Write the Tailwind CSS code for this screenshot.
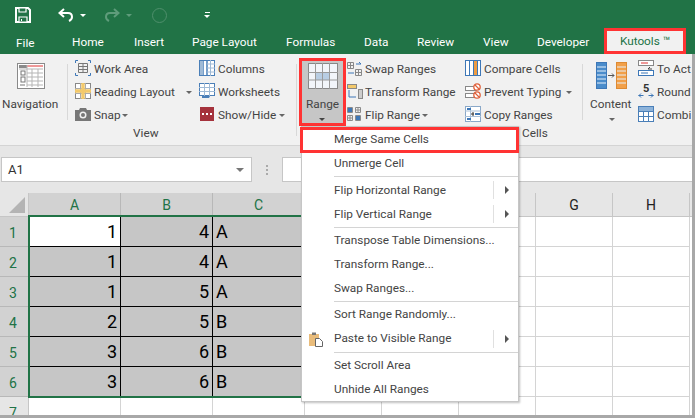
<!DOCTYPE html>
<html>
<head>
<meta charset="utf-8">
<script src="https://cdn.jsdelivr.net/npm/@tailwindcss/browser@4"></script>
</head>
<body class="bg-white">
<div class="relative w-[695px] h-[418px] overflow-hidden font-['Roboto','Noto_Sans',sans-serif] text-[11.800px] leading-[19px] text-[#444]">

  <!-- title + tabs -->
  <div class="h-[54px] bg-[#217346] flex flex-col text-white">
    <div class="h-[30px] flex items-center pl-[15px]">
      <svg class="w-[16px] h-[16px]" viewBox="0 0 16 16" fill="none"><path d="M1 1h12l2 2v12H1z" stroke="#fff" stroke-width="2"/><path d="M4 1h7v4H4zM4 10h8v5H4z" fill="#217346" stroke="#fff" stroke-width="1.2"/><path d="M6 12h1v2H6z" fill="#fff"/></svg>
      <svg class="ml-[27px] w-[16px] h-[14px]" viewBox="0 0 16 14" fill="none"><path d="M6 1 1.500 5 6 9" stroke="#fff" stroke-width="2"/><path d="M2 5h8c3 0 4 2 4 4s-1 3-3 4" stroke="#fff" stroke-width="2"/></svg>
      <span class="ml-[6px] w-0 h-0 border-x-[3px] border-x-transparent border-t-[3px] border-t-white"></span>
      <svg class="ml-[18px] w-[16px] h-[14px]" viewBox="0 0 16 14" fill="none"><path d="M10 1l4.500 4L10 9" stroke="#5f9c7b" stroke-width="2"/><path d="M14 5H6C3 5 2 7 2 9s1 3 3 4" stroke="#5f9c7b" stroke-width="2"/></svg>
      <span class="ml-[6px] w-0 h-0 border-x-[3px] border-x-transparent border-t-[3px] border-t-[#5f9c7b]"></span>
      <span class="ml-[20px] w-[15px] h-[15px] rounded-full border border-[#4f8f6c]"></span>
      <span class="ml-[37px] flex flex-col items-center gap-[2px]"><span class="w-[5px] h-px bg-white"></span><span class="w-0 h-0 border-x-[3px] border-x-transparent border-t-[3px] border-t-white"></span></span>
    </div>
    <div class="relative h-[24px]">
      <span class="absolute left-[16px] top-[4px]">File</span>
      <span class="absolute left-[72px] top-[3px]">Home</span>
      <span class="absolute left-[134px] top-[3px]">Insert</span>
      <span class="absolute left-[192px] top-[3px]">Page Layout</span>
      <span class="absolute left-[286px] top-[3px]">Formulas</span>
      <span class="absolute left-[364px] top-[3px]">Data</span>
      <span class="absolute left-[417px] top-[3px]">Review</span>
      <span class="absolute left-[483px] top-[3px]">View</span>
      <span class="absolute left-[537px] top-[3px]">Developer</span>
      <span class="absolute left-[604px] top-[-2px] w-[82px] h-[26px] bg-[#f1f1f1] border-[3px] border-[#f33] text-[#217346] flex items-center justify-center">Kutools ™</span>
    </div>
  </div>

  <!-- ribbon -->
  <div class="relative h-[92px] bg-[#f1f1f1] border-b border-[#d4d4d4]">
    <!-- Navigation -->
    <svg class="absolute left-[17px] top-[9px] w-[28px] h-[26px]" viewBox="0 0 28 26" fill="none"><rect x=".5" y=".5" width="27" height="25" fill="#fff" stroke="#8a8a8a"/><rect x="2" y="2" width="8" height="3" fill="#8a8a8a"/><path d="M10 3h16" stroke="#d33" /><path d="M2 6h24M10 10h16M10 14h16M10 18h16M10 22h16M10 2v22M15 6v18M21 6v18" stroke="#b5b5b5"/><rect x="4" y="8" width="4" height="4" stroke="#777"/><rect x="4" y="14" width="4" height="5" stroke="#777"/><path d="M3 22h5" stroke="#777"/></svg>
    <span class="absolute left-[2px] top-[41px]">Navigation</span>
    <div class="absolute left-[67px] top-[10px] h-[56px] w-px bg-[#d8d8d8]"></div>

    <!-- view col 1 -->
    <svg class="absolute left-[75px] top-[6px] w-[16px] h-[16px]" viewBox="0 0 16 16" fill="none"><path d="M3.500 3.500h9v9h-9zM3.500 6.500h9M3.500 9.500h9M8 3.500v9" stroke="#777"/><path d="M.5 3V.5H3M13 .5h2.500V3M.5 13v2.500H3M13 15.500h2.500V13" stroke="#3d77b7"/></svg>
    <span class="absolute left-[94px] top-[6px]">Work Area</span>
    <svg class="absolute left-[75px] top-[29px] w-[16px] h-[16px]" viewBox="0 0 16 16" fill="none"><rect x=".5" y=".5" width="15" height="15" fill="#fff" stroke="#888"/><path d="M5.500 0v16M10.500 0v16M0 5.500h16M0 10.500h16" stroke="#aaa"/><path d="M0 8h16M8 0v16" stroke="#f3c96b" stroke-width="3.400"/></svg>
    <span class="absolute left-[94px] top-[29px]">Reading Layout</span>
    <span class="absolute left-[186px] top-[37px] w-0 h-0 border-x-[3px] border-x-transparent border-t-[3px] border-t-[#666]"></span>
    <svg class="absolute left-[75px] top-[54px] w-[16px] h-[13px]" viewBox="0 0 16 13"><path d="M0 2h4l1-2h6l1 2h4v11H0z" fill="#777"/><circle cx="8" cy="7" r="3.500" fill="#f1f1f1"/><circle cx="8" cy="7" r="2" fill="#777"/></svg>
    <span class="absolute left-[94px] top-[52px]">Snap</span>
    <span class="absolute left-[122px] top-[60px] w-0 h-0 border-x-[3px] border-x-transparent border-t-[3px] border-t-[#666]"></span>

    <!-- view col 2 -->
    <svg class="absolute left-[199px] top-[6px] w-[16px] h-[16px]" viewBox="0 0 16 16" fill="none"><rect x=".5" y=".5" width="15" height="15" fill="#fff" stroke="#4a7fb8"/><path d="M4 0v16M8 0v16" stroke="#4a7fb8" stroke-width="1.500"/><path d="M11.500 0v16M8 4h8M8 8h8M8 12h8" stroke="#9fbad6"/><rect x="1" y="1" width="3" height="14" fill="#9fbad6"/></svg>
    <span class="absolute left-[218px] top-[6px]">Columns</span>
    <svg class="absolute left-[199px] top-[29px] w-[16px] h-[16px]" viewBox="0 0 16 16" fill="none"><rect x=".5" y=".5" width="15" height="12" fill="#fff" stroke="#4a7fb8"/><path d="M0 4.500h16M0 8.500h16M5.500 0v13M10.500 0v13" stroke="#9fbad6"/><path d="M3 13v2h7l1-2z" fill="#4a7fb8"/></svg>
    <span class="absolute left-[218px] top-[29px]">Worksheets</span>
    <div class="absolute left-[200px] top-[53px] w-[14px] h-[14px] bg-[#a5323c] flex items-center justify-center text-white"><svg class="w-[10px] h-[2px]" viewBox="0 0 10 2"><path d="M0 0h2v2H0zM4 0h2v2H4zM8 0h2v2H8z" fill="#fff"/></svg></div>
    <span class="absolute left-[218px] top-[52px]">Show/Hide</span>
    <span class="absolute left-[279px] top-[60px] w-0 h-0 border-x-[3px] border-x-transparent border-t-[3px] border-t-[#666]"></span>
    <span class="absolute left-[133px] top-[70px]">View</span>
    <div class="absolute left-[296px] top-[10px] h-[72px] w-px bg-[#d8d8d8]"></div>

    <!-- Range -->
    <div class="absolute left-[299px] top-[4px] w-[47px] h-[68px] bg-[#c6c6c6] border-[3px] border-[#f33]"></div>
    <svg class="absolute left-[308px] top-[9px] w-[30px] h-[26px]" viewBox="0 0 30 26" fill="none"><rect x=".5" y=".5" width="29" height="25" fill="#f2f5fa" stroke="#888"/><rect x="7" y="9" width="14" height="8" fill="#b8cde3"/><path d="M7.500 0v26M14.500 0v26M21.500 0v26M0 9.500h30M0 17h30" stroke="#9a9a9a"/></svg>
    <span class="absolute left-[306px] top-[41px]">Range</span>
    <span class="absolute left-[319px] top-[64px] w-0 h-0 border-x-[3px] border-x-transparent border-t-[3px] border-t-[#444]"></span>

    <!-- range col 1 -->
    <svg class="absolute left-[347px] top-[7px] w-[16px] h-[15px]" viewBox="0 0 16 15" fill="none"><path d="M.5 1.500h6v6h-6zM3.500 1.500v6M.5 4.500h6M8.500 8.500h6v6h-6zM11.500 8.500v6M8.500 11.500h6" stroke="#888"/><path d="M9 3h5l-2-2M7 12H1" stroke="#3d77b7"/></svg>
    <span class="absolute left-[365px] top-[6px]">Swap Ranges</span>
    <svg class="absolute left-[347px] top-[30px] w-[16px] h-[15px]" viewBox="0 0 16 15" fill="none"><rect x=".5" y=".5" width="9" height="4" fill="#f3c96b" stroke="#888"/><rect x="11.500" y="5.500" width="4" height="9" fill="#ccc" stroke="#888"/><path d="M2 6v7h7" stroke="#3d77b7"/></svg>
    <span class="absolute left-[365px] top-[29px]">Transform Range</span>
    <svg class="absolute left-[347px] top-[53px] w-[14px] h-[14px]" viewBox="0 0 14 14" fill="none"><path d="M.5.500h5v5h-5zM8.500.500h5v5h-5zM.5 8.500h5v5h-5zM8.500 8.500h5v5h-5zM3 .5v5M.5 3h5M11 .5v5M8.500 3h5M3 8.500v5M.5 11h5M11 8.500v5M8.500 11h5" stroke="#8a8a8a"/><path d="M1 1h4v4H1zM9 9h4v4H9z" fill="#3d77b7"/></svg>
    <span class="absolute left-[365px] top-[52px]">Flip Range</span>
    <span class="absolute left-[422px] top-[60px] w-0 h-0 border-x-[3px] border-x-transparent border-t-[3px] border-t-[#666]"></span>

    <!-- range col 2 -->
    <svg class="absolute left-[465px] top-[6px] w-[16px] h-[16px]" viewBox="0 0 16 16" fill="none"><rect x=".5" y=".5" width="15" height="15" fill="#fff" stroke="#3d77b7"/><rect x="9" y="1" width="4" height="14" fill="#ef9c42"/><path d="M4.500 0v16M8.500 0v16M12.500 0v16" stroke="#3d77b7"/></svg>
    <span class="absolute left-[484px] top-[6px]">Compare Cells</span>
    <svg class="absolute left-[465px] top-[29px] w-[16px] h-[16px]" viewBox="0 0 16 16" fill="none"><rect x=".5" y="3.500" width="11" height="4" fill="#fff" stroke="#888"/><rect x=".5" y="10.500" width="11" height="4" fill="#fff" stroke="#888"/><circle cx="12" cy="4" r="3.200" fill="#fff" stroke="#e0603a" stroke-width="1.300"/><circle cx="12" cy="12" r="3.200" fill="#fff" stroke="#e0603a" stroke-width="1.300"/><path d="M10 2l4 4M10 10l4 4" stroke="#e0603a" stroke-width="1.200"/></svg>
    <span class="absolute left-[484px] top-[29px]">Prevent Typing</span>
    <span class="absolute left-[566px] top-[37px] w-0 h-0 border-x-[3px] border-x-transparent border-t-[3px] border-t-[#666]"></span>
    <svg class="absolute left-[465px] top-[52px] w-[16px] h-[16px]" viewBox="0 0 16 16" fill="none"><rect x=".5" y=".5" width="15" height="15" fill="#fff" stroke="#8aa8c8"/><path d="M0 5h16M0 10.500h16M5.500 0v16" stroke="#a9c0d8"/><rect x="2" y="2" width="4" height="2" fill="#3d77b7"/><rect x="10" y="7" width="5" height="2" fill="#3d77b7"/><rect x="2" y="12" width="4" height="2" fill="#3d77b7"/><path d="M6 8h3M8 6v4" stroke="#333"/></svg>
    <span class="absolute left-[484px] top-[52px]">Copy Ranges</span>
    <span class="absolute left-[522px] top-[70px]">Cells</span>
    <div class="absolute left-[582px] top-[10px] h-[56px] w-px bg-[#d8d8d8]"></div>

    <!-- content -->
    <svg class="absolute left-[596px] top-[8px] w-[31px] h-[27px]" viewBox="0 0 31 27" fill="none"><rect x=".5" y=".5" width="10" height="26" fill="#4a8ccb" stroke="#3d77b7"/><rect x="20.500" y=".5" width="10" height="26" fill="#f2a049" stroke="#dd8a33"/><path d="M1 5h9M1 9h9M1 13h9M1 17h9M1 21h9M21 5h9M21 9h9M21 13h9M21 17h9M21 21h9" stroke="#e6f0fa"/><path d="M12 13.500h6M16 11.500l2 2-2 2" stroke="#555"/></svg>
    <span class="absolute left-[590px] top-[41px]">Content</span>
    <span class="absolute left-[609px] top-[64px] w-0 h-0 border-x-[3px] border-x-transparent border-t-[3px] border-t-[#666]"></span>

    <svg class="absolute left-[638px] top-[6px] w-[16px] h-[16px]" viewBox="0 0 16 16" fill="none"><rect x=".5" y=".5" width="15" height="5" fill="#fff" stroke="#888"/><path d="M3 3h7" stroke="#d33"/><rect x=".5" y="10.500" width="15" height="5" fill="#fff" stroke="#3d77b7"/><path d="M3 13h7" stroke="#3d77b7"/><path d="M10 9h4M12 7l-2 2" stroke="#444"/></svg>
    <span class="absolute left-[657px] top-[6px]">To Act</span>
    <svg class="absolute left-[638px] top-[29px] w-[16px] h-[16px]" viewBox="0 0 16 16" fill="none"><path d="M.5 12.500h5M1 12.500l2-2M1 12.500l2 2M10.500 12.500h5M15 12.500l-2-2M15 12.500l-2 2" stroke="#3d77b7"/></svg>
    <span class="absolute left-[643px] top-[25px] text-[11px] font-bold text-[#333]">5</span>
    <span class="absolute left-[657px] top-[29px]">Round</span>
    <svg class="absolute left-[638px] top-[52px] w-[16px] h-[16px]" viewBox="0 0 16 16" fill="none"><rect x=".5" y=".5" width="15" height="15" fill="#fff" stroke="#4a7fb8"/><rect x="1" y="1" width="14" height="4" fill="#8db3da"/><path d="M0 5.500h16M0 10.500h16M5.500 5v11M10.500 5v11" stroke="#4a7fb8"/></svg>
    <span class="absolute left-[657px] top-[52px]">Combi</span>
  </div>

  <!-- gap + formula -->
  <div class="h-[47px] bg-[#e6e6e6] pt-[11px]">
    <div class="flex h-[26px]">
      <div class="ml-[1px] w-[253px] h-[25px] bg-white border border-[#c6c6c6] flex items-center pl-[6px] pr-[7px] justify-between text-[#333] text-[13px]"><span>A1</span><span class="w-0 h-0 border-x-[4px] border-x-transparent border-t-[4px] border-t-[#777]"></span></div>
      <div class="ml-[14px] mt-[8px] flex flex-col gap-[2px]"><span class="w-[2px] h-[2px] bg-[#aaa]"></span><span class="w-[2px] h-[2px] bg-[#aaa]"></span><span class="w-[2px] h-[2px] bg-[#aaa]"></span></div>
      <div class="ml-[14px] w-[417px] h-[25px] bg-white border border-[#c6c6c6]"></div>
    </div>
  </div>

  <!-- sheet -->
  <div class="bg-white h-[225px]">
    <div class="flex h-[24px] bg-[#e6e6e6] text-[14px] leading-[25px] text-center border-b border-[#c6c6c6]">
      <div class="relative w-[29px] shrink-0 border-r border-[#c6c6c6]"><span class="absolute right-[3px] bottom-[3px] w-0 h-0 border-l-[16px] border-l-transparent border-b-[16px] border-b-[#b4b4b4]"></span></div>
      <div class="w-[92px] shrink-0 bg-[#d2d2d2] text-[#217346] border-r border-[#b8b8b8]">A</div>
      <div class="w-[92px] shrink-0 bg-[#d2d2d2] text-[#217346] border-r border-[#b8b8b8]">B</div>
      <div class="w-[92px] shrink-0 bg-[#d2d2d2] text-[#217346] border-r border-[#b8b8b8]">C</div>
      <div class="w-[77px] shrink-0 border-r border-[#c6c6c6]"></div>
      <div class="w-[77px] shrink-0 border-r border-[#c6c6c6]"></div>
      <div class="w-[77px] shrink-0 border-r border-[#c6c6c6]"></div>
      <div class="w-[77px] shrink-0 border-r border-[#c6c6c6] text-[#222]">G</div>
      <div class="w-[77px] shrink-0 border-r border-[#c6c6c6] text-[#222]">H</div>
    </div>
    <div class="grid grid-cols-[29px_92px_92px_92px_77px_77px_77px_77px_77px] auto-rows-[30px] text-[18px] leading-[29px] text-black">
      <div class="bg-[#d2d2d2] text-[14px] text-[#217346] pl-[9px] pt-[2px] border-r border-b border-[#b8b8b8]">1</div><div class="bg-white text-right pr-[3px] border-r border-b border-black">1</div><div class="bg-[#c6c6c6] text-right pr-[3px] border-r border-b border-black">4</div><div class="bg-[#c6c6c6] pl-[3px] border-b border-black">A</div><div class="border-r border-b border-[#d4d4d4]"></div><div class="border-r border-b border-[#d4d4d4]"></div><div class="border-r border-b border-[#d4d4d4]"></div><div class="border-r border-b border-[#d4d4d4]"></div><div class="border-r border-b border-[#d4d4d4]"></div>
      <div class="bg-[#d2d2d2] text-[14px] text-[#217346] pl-[9px] pt-[2px] border-r border-b border-[#b8b8b8]">2</div><div class="bg-[#c6c6c6] text-right pr-[3px] border-r border-b border-black">1</div><div class="bg-[#c6c6c6] text-right pr-[3px] border-r border-b border-black">4</div><div class="bg-[#c6c6c6] pl-[3px] border-b border-black">A</div><div class="border-r border-b border-[#d4d4d4]"></div><div class="border-r border-b border-[#d4d4d4]"></div><div class="border-r border-b border-[#d4d4d4]"></div><div class="border-r border-b border-[#d4d4d4]"></div><div class="border-r border-b border-[#d4d4d4]"></div>
      <div class="bg-[#d2d2d2] text-[14px] text-[#217346] pl-[9px] pt-[2px] border-r border-b border-[#b8b8b8]">3</div><div class="bg-[#c6c6c6] text-right pr-[3px] border-r border-b border-black">1</div><div class="bg-[#c6c6c6] text-right pr-[3px] border-r border-b border-black">5</div><div class="bg-[#c6c6c6] pl-[3px] border-b border-black">A</div><div class="border-r border-b border-[#d4d4d4]"></div><div class="border-r border-b border-[#d4d4d4]"></div><div class="border-r border-b border-[#d4d4d4]"></div><div class="border-r border-b border-[#d4d4d4]"></div><div class="border-r border-b border-[#d4d4d4]"></div>
      <div class="bg-[#d2d2d2] text-[14px] text-[#217346] pl-[9px] pt-[2px] border-r border-b border-[#b8b8b8]">4</div><div class="bg-[#c6c6c6] text-right pr-[3px] border-r border-b border-black">2</div><div class="bg-[#c6c6c6] text-right pr-[3px] border-r border-b border-black">5</div><div class="bg-[#c6c6c6] pl-[3px] border-b border-black">B</div><div class="border-r border-b border-[#d4d4d4]"></div><div class="border-r border-b border-[#d4d4d4]"></div><div class="border-r border-b border-[#d4d4d4]"></div><div class="border-r border-b border-[#d4d4d4]"></div><div class="border-r border-b border-[#d4d4d4]"></div>
      <div class="bg-[#d2d2d2] text-[14px] text-[#217346] pl-[9px] pt-[2px] border-r border-b border-[#b8b8b8]">5</div><div class="bg-[#c6c6c6] text-right pr-[3px] border-r border-b border-black">3</div><div class="bg-[#c6c6c6] text-right pr-[3px] border-r border-b border-black">6</div><div class="bg-[#c6c6c6] pl-[3px] border-b border-black">B</div><div class="border-r border-b border-[#d4d4d4]"></div><div class="border-r border-b border-[#d4d4d4]"></div><div class="border-r border-b border-[#d4d4d4]"></div><div class="border-r border-b border-[#d4d4d4]"></div><div class="border-r border-b border-[#d4d4d4]"></div>
      <div class="bg-[#d2d2d2] text-[14px] text-[#217346] pl-[9px] pt-[2px] border-r border-b border-[#b8b8b8]">6</div><div class="bg-[#c6c6c6] text-right pr-[3px] border-r border-b border-r-black border-b-white">3</div><div class="bg-[#c6c6c6] text-right pr-[3px] border-r border-b border-r-black border-b-white">6</div><div class="bg-[#c6c6c6] pl-[3px] border-b border-white">B</div><div class="border-r border-b border-[#d4d4d4]"></div><div class="border-r border-b border-[#d4d4d4]"></div><div class="border-r border-b border-[#d4d4d4]"></div><div class="border-r border-b border-[#d4d4d4]"></div><div class="border-r border-b border-[#d4d4d4]"></div>
      <div class="bg-[#e6e6e6] text-[14px] text-[#217346] pl-[9px] pt-[2px] border-r border-[#c6c6c6]">7</div><div class="border-r border-[#d4d4d4]"></div><div class="border-r border-[#d4d4d4]"></div><div class="border-r border-[#d4d4d4]"></div><div class="border-r border-[#d4d4d4]"></div><div class="border-r border-[#d4d4d4]"></div><div class="border-r border-[#d4d4d4]"></div><div class="border-r border-[#d4d4d4]"></div><div class="border-r border-[#d4d4d4]"></div>
    </div>
  </div>

  <!-- selection outline -->
  <div class="absolute left-[28px] top-[215px] w-[290px] h-[183px] border-[2px] border-[#217346] pointer-events-none"></div>

  <!-- dropdown -->
  <div class="absolute left-[301px] top-[126px] w-[218px] h-[276px] bg-white border border-[#c6c6c6] shadow-[1px_1px_2px_rgba(0,0,0,0.25)] flex flex-col pt-[1px]">
    <div class="absolute left-[-2px] top-0 w-[219px] h-[26px] border-[3px] border-[#f33]"></div>
    <div class="h-[24px] flex items-center pl-[32px]">Merge Same Cells</div>
    <div class="h-[24px] flex items-center pl-[32px]">Unmerge Cell</div>
    <div class="ml-[32px] h-px mt-[1px] bg-[#d4d4d4]"></div>
    <div class="h-[24px] mt-[1px] flex items-center pl-[32px] relative">Flip Horizontal Range<span class="absolute right-[24px] top-[3px] h-[18px] w-px bg-[#e0e0e0]"></span><span class="absolute right-[9px] top-[8px] w-0 h-0 border-y-[4px] border-y-transparent border-l-[4px] border-l-[#555]"></span></div>
    <div class="h-[24px] flex items-center pl-[32px] relative">Flip Vertical Range<span class="absolute right-[24px] top-[3px] h-[18px] w-px bg-[#e0e0e0]"></span><span class="absolute right-[9px] top-[8px] w-0 h-0 border-y-[4px] border-y-transparent border-l-[4px] border-l-[#555]"></span></div>
    <div class="ml-[32px] h-px mt-[1px] bg-[#d4d4d4]"></div>
    <div class="h-[24px] mt-[1px] flex items-center pl-[32px]">Transpose Table Dimensions...</div>
    <div class="h-[24px] flex items-center pl-[32px]">Transform Range...</div>
    <div class="h-[24px] flex items-center pl-[32px]">Swap Ranges...</div>
    <div class="ml-[32px] h-px mt-[1px] bg-[#d4d4d4]"></div>
    <div class="h-[24px] mt-[1px] flex items-center pl-[32px]">Sort Range Randomly...</div>
    <div class="h-[24px] flex items-center pl-[32px] relative">
      <svg class="absolute left-[6px] top-[4px] w-[16px] h-[16px]" viewBox="0 0 16 16"><path d="M1 3h10v12H1z" fill="#e9bc7b"/><path d="M4 1.500h4V4H4z" fill="#777"/><path d="M7.500 7.500h4l3 3v5h-7z" fill="#fff" stroke="#666"/></svg>
      Paste to Visible Range<span class="absolute right-[24px] top-[3px] h-[18px] w-px bg-[#e0e0e0]"></span><span class="absolute right-[9px] top-[8px] w-0 h-0 border-y-[4px] border-y-transparent border-l-[4px] border-l-[#555]"></span></div>
    <div class="ml-[32px] h-px mt-[1px] bg-[#d4d4d4]"></div>
    <div class="h-[24px] mt-[1px] flex items-center pl-[32px]">Set Scroll Area</div>
    <div class="h-[24px] flex items-center pl-[32px]">Unhide All Ranges</div>
  </div>

  <!-- edge shadows -->
  <div class="absolute right-0 top-[54px] bottom-0 w-[3px] bg-[#a8a8a8]"></div>
  <div class="absolute left-0 right-0 bottom-0 h-[3px] bg-[#a8a8a8]"></div>
</div>
</body>
</html>
